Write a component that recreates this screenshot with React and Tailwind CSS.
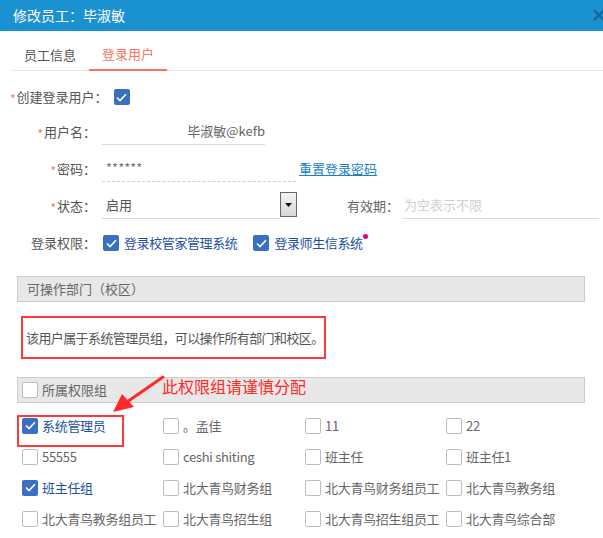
import React from 'react';

const GROUPS = [
  ['系统管理员', true], ['。孟佳', false], ['11', false], ['22', false],
  ['55555', false], ['ceshi shiting', false], ['班主任', false], ['班主任1', false],
  ['班主任组', true], ['北大青鸟财务组', false], ['北大青鸟财务组员工', false], ['北大青鸟教务组', false],
  ['北大青鸟教务组员工', false], ['北大青鸟招生组', false], ['北大青鸟招生组员工', false], ['北大青鸟综合部', false],
];

function Box({ checked }) {
  return checked ? (
    <span className="flex-none w-4 h-4 rounded-[2px] bg-[#3a6fc2] flex items-center justify-center">
      <svg width="11" height="9" viewBox="0 0 11 9" fill="none">
        <path d="M1 4.5 L4 7.5 L10 1.2" stroke="#fff" strokeWidth="1.6" />
      </svg>
    </span>
  ) : (
    <span className="flex-none w-4 h-4 rounded-[2px] border border-[#bdbdbd] bg-white" />
  );
}

const Star = () => <span className="text-[#f27a66] text-[12px] mr-[1px] relative top-[2px]">*</span>;

export default function App() {
  return (
    <div className="relative w-[603px] h-[538px] overflow-hidden bg-white text-[13px] text-[#555]"
      style={{ fontFamily: '"Noto Sans CJK SC", "Noto Sans", sans-serif' }}>
      {/* Title bar */}
      <div className="h-[31px] bg-[#1a91d0] flex items-center pl-[13px] text-white text-[14px] relative">
        修改员工：毕淑敏
        <svg className="absolute left-[593px] top-[9px]" width="12" height="12" viewBox="0 0 12 12">
          <path d="M1 1 L11 11 M11 1 L1 11" stroke="#14699c" strokeWidth="2.4" />
        </svg>
      </div>

      {/* Tabs */}
      <div className="ml-[11px] mt-[8px] flex border-b border-[#e6e6e6] h-[32px]">
        <div className="w-[78px] flex items-center justify-center text-[#555]">员工信息</div>
        <div className="w-[78px] flex items-center justify-center text-[#f37561] border-b-2 border-[#f37561] -mb-px">登录用户</div>
      </div>

      {/* Create login user */}
      <div className="mt-[14px] h-[24px] flex items-center pl-[10px]">
        <Star />
        <span>创建登录用户：</span>
        <span className="ml-[6px]"><Box checked /></span>
      </div>

      {/* Username */}
      <div className="mt-[9px] h-[27px] flex items-center">
        <div className="w-[96px] text-right"><Star />用户名：</div>
        <div className="ml-[6px] w-[163px] h-[27px] border-b border-[#dcdcdc] flex items-center justify-end text-[#666]">毕淑敏@kefb</div>
      </div>

      {/* Password */}
      <div className="mt-[10px] h-[27px] flex items-center">
        <div className="w-[96px] text-right"><Star />密码：</div>
        <div className="ml-[6px] w-[194px] h-[27px] border-b border-dashed border-[#cfcfcf] flex items-center pl-[4px] text-[#777]">******</div>
        <a className="ml-[3px] text-[#1a7fc8] underline">重置登录密码</a>
      </div>

      {/* Status */}
      <div className="mt-[10px] h-[27px] flex items-center">
        <div className="w-[96px] text-right"><Star />状态：</div>
        <div className="ml-[6px] w-[195px] h-[27px] flex items-end">
          <div className="flex-1 h-[27px] border-b border-[#dcdcdc] flex items-center pl-[4px] text-[#555]">启用</div>
          <div className="w-[17px] h-[25px] mb-[2px] border border-[#666] bg-gradient-to-b from-[#f4f4f4] to-[#d6d6d6] flex items-center justify-center">
            <svg width="7" height="4" viewBox="0 0 7 4"><path d="M0 0 H7 L3.5 4 Z" fill="#111" /></svg>
          </div>
        </div>
        <div className="ml-[50px] text-[#666]">有效期：</div>
        <div className="ml-[4px] w-[196px] h-[27px] border-b border-[#dcdcdc] flex items-center pl-[1px] text-[#d0d0d0]">为空表示不限</div>
      </div>

      {/* Login permission */}
      <div className="mt-[14px] h-[20px] flex items-center">
        <div className="w-[96px] text-right">登录权限：</div>
        <span className="ml-[7px]"><Box checked /></span>
        <span className="ml-[5px] text-[#1d4f9f] tracking-[-0.4px]">登录校管家管理系统</span>
        <span className="ml-[16px]"><Box checked /></span>
        <span className="ml-[5px] text-[#1d4f9f] tracking-[-0.4px]">登录师生信系统</span>
        <span className="w-[5px] h-[5px] rounded-full bg-[#e5007e] self-start mt-[1px]" />
      </div>

      {/* Departments */}
      <div className="mt-[23px] ml-[17px] w-[568px] h-[26px] bg-[#e8e8e8] border border-[#cccccc] flex items-center pl-[9px] text-[#666]">
        可操作部门（校区）
      </div>
      <div className="mt-[14px] ml-[21px] w-[305px] h-[43px] border-2 border-[#ff3838] flex items-center pl-[3px] text-[#555] whitespace-nowrap tracking-[-0.6px]">
        该用户属于系统管理员组，可以操作所有部门和校区。
      </div>

      {/* Groups */}
      <div className="mt-[18px] ml-[17px] w-[568px] h-[26px] bg-[#e8e8e8] border border-[#cccccc] flex items-center pl-[4px] text-[#666]">
        <Box />
        <span className="ml-[4px]">所属权限组</span>
      </div>
      <div className="mt-[7px] ml-[22px] grid grid-cols-[141px_142px_141px_141px]">
        {GROUPS.map(([label, on]) => (
          <div key={label} className="h-[31px] flex items-center gap-[4px]">
            <Box checked={on} />
            <span className={on ? 'text-[#1d4f9f] whitespace-nowrap tracking-[-0.3px]' : 'text-[#666] whitespace-nowrap tracking-[-0.3px]'}>{label}</span>
          </div>
        ))}
      </div>

      {/* annotations */}
      <div className="absolute left-[17px] top-[415px] w-[107px] h-[32px] border-2 border-[#ff3838]" />
      <div className="absolute left-[162px] top-[374px] text-[16px] text-[#ff2a2a]">此权限组请谨慎分配</div>
      <svg className="absolute left-[105px] top-[374px]" width="62" height="42" viewBox="0 0 62 42">
        <path d="M58 3 L22 28" stroke="#ff2a2a" strokeWidth="3" strokeLinecap="round" />
        <path d="M8 38 L17 20 L29 33 Z" fill="#ff2a2a" />
      </svg>
    </div>
  );
}
